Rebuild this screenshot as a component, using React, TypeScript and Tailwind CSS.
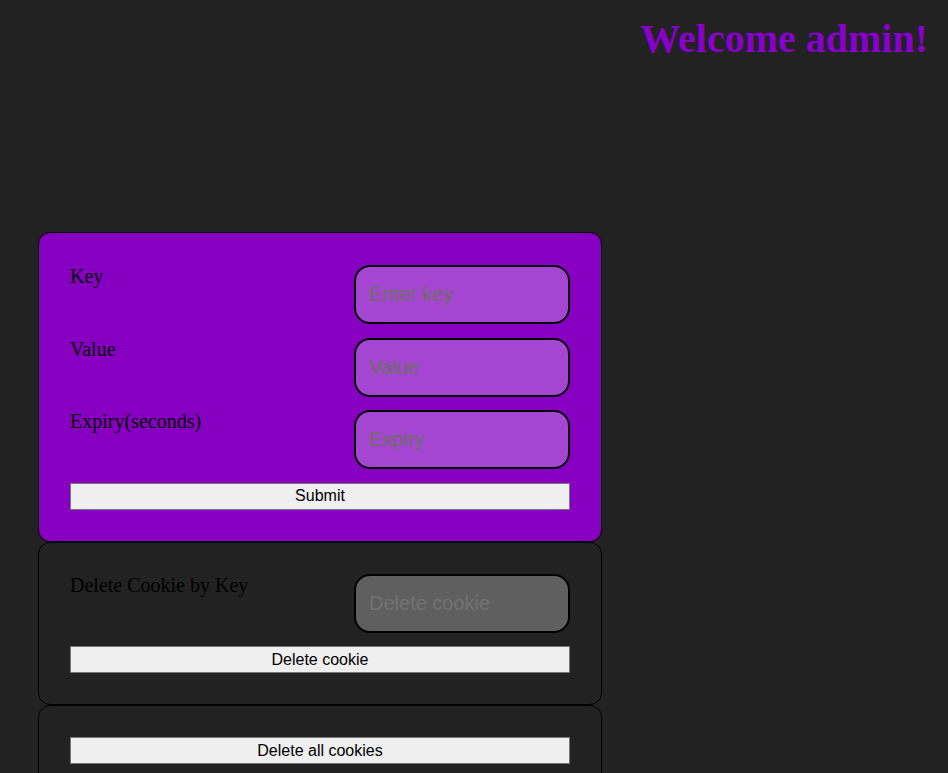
const serif = { fontFamily: '"Liberation Serif", "Times New Roman", serif' };

function Field({ label, placeholder }: { label: string; placeholder: string }) {
  return (
    <div className="flex items-start justify-between">
      <label className="text-[20px] leading-[23px] text-black" style={serif}>
        {label}
      </label>
      <input
        placeholder={placeholder}
        className="h-[59px] w-[216px] rounded-[16px] border-2 border-black bg-[#a546d3] pl-[13px] font-['Liberation_Sans',Arial,sans-serif] text-[20px] text-black outline-none placeholder:text-[#6c7060]"
      />
    </div>
  );
}

function Btn({ children }: { children: React.ReactNode }) {
  return (
    <button className="h-[27px] w-full border border-[#767676] bg-[#efefef] font-['Liberation_Sans',Arial,sans-serif] text-[16px] leading-none text-black">
      {children}
    </button>
  );
}

export default function App() {
  return (
    <div className="min-h-screen bg-[#222222] pb-10">
      <h1
        className="pr-5 pt-4 text-right text-[40px] font-bold leading-[46px] text-[#8800cc]"
        style={serif}
      >
        Welcome admin!
      </h1>

      <div className="ml-[38px] mt-[170px] flex w-[564px] flex-col">
        <form
          onSubmit={(e) => e.preventDefault()}
          className="flex flex-col gap-[13.5px] rounded-[12px] border border-black bg-[#8700c1] px-[31px] pb-[31px] pt-[32px]"
        >
          <Field label="Key" placeholder="Enter key" />
          <Field label="Value" placeholder="Value" />
          <Field label="Expiry(seconds)" placeholder="Expiry" />
          <Btn>Submit</Btn>
        </form>

        <div className="flex flex-col gap-[13.5px] rounded-[12px] border border-black px-[31px] pb-[31px] pt-[31px]">
          <div className="flex items-start justify-between">
            <label className="text-[20px] leading-[23px] text-black" style={serif}>
              Delete Cookie by Key
            </label>
            <input
              placeholder="Delete cookie"
              className="h-[59px] w-[216px] rounded-[16px] border-2 border-black bg-[#5f5f5f] pl-[13px] font-['Liberation_Sans',Arial,sans-serif] text-[20px] text-black outline-none placeholder:text-[#727272]"
            />
          </div>
          <Btn>Delete cookie</Btn>
        </div>

        <div className="rounded-[12px] border border-black px-[31px] pb-[32px] pt-[31px]">
          <Btn>Delete all cookies</Btn>
        </div>
      </div>
    </div>
  );
}
